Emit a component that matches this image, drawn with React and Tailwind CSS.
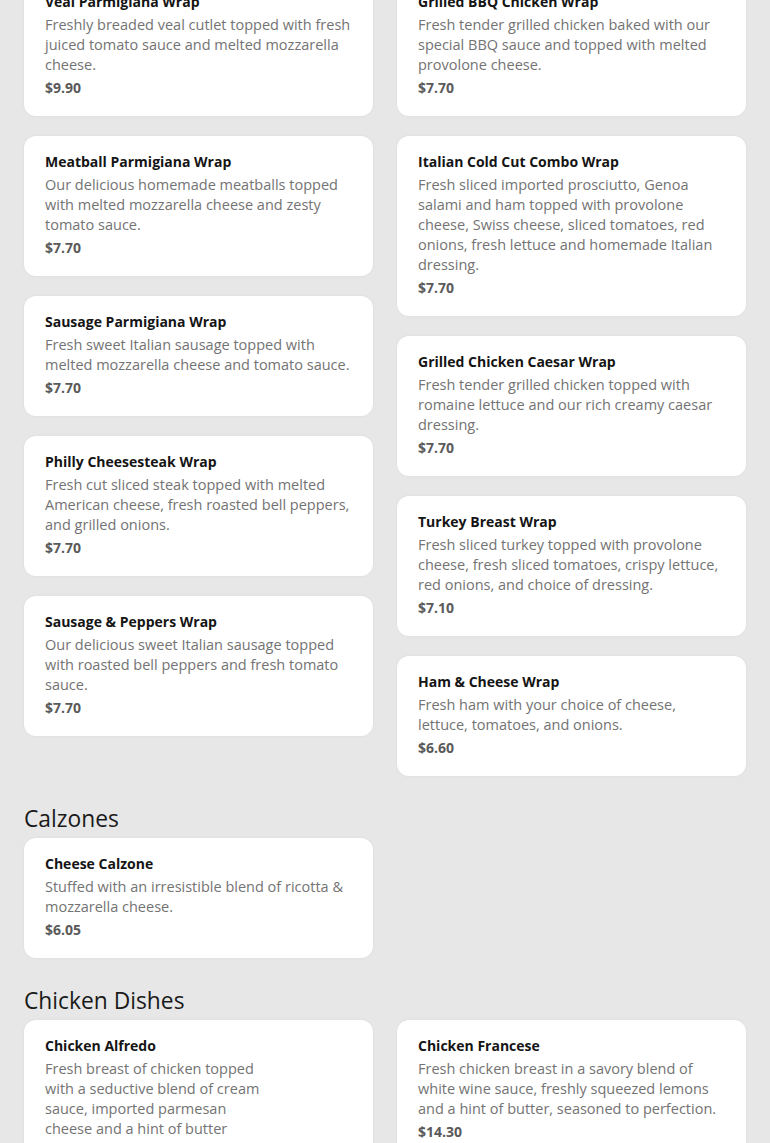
import React from 'react';

// Menu data, split into the two columns as they stack on the page
const wrapsLeft = [
  { name: 'Veal Parmigiana Wrap', desc: 'Freshly breaded veal cutlet topped with fresh juiced tomato sauce and melted mozzarella cheese.', price: '$9.90' },
  { name: 'Meatball Parmigiana Wrap', desc: 'Our delicious homemade meatballs topped with melted mozzarella cheese and zesty tomato sauce.', price: '$7.70' },
  { name: 'Sausage Parmigiana Wrap', desc: 'Fresh sweet Italian sausage topped with melted mozzarella cheese and tomato sauce.', price: '$7.70' },
  { name: 'Philly Cheesesteak Wrap', desc: 'Fresh cut sliced steak topped with melted American cheese, fresh roasted bell peppers, and grilled onions.', price: '$7.70' },
  { name: 'Sausage & Peppers Wrap', desc: 'Our delicious sweet Italian sausage topped with roasted bell peppers and fresh tomato sauce.', price: '$7.70' },
];

const wrapsRight = [
  { name: 'Grilled BBQ Chicken Wrap', desc: 'Fresh tender grilled chicken baked with our special BBQ sauce and topped with melted provolone cheese.', price: '$7.70' },
  { name: 'Italian Cold Cut Combo Wrap', desc: 'Fresh sliced imported prosciutto, Genoa salami and ham topped with provolone cheese, Swiss cheese, sliced tomatoes, red onions, fresh lettuce and homemade Italian dressing.', price: '$7.70' },
  { name: 'Grilled Chicken Caesar Wrap', desc: 'Fresh tender grilled chicken topped with romaine lettuce and our rich creamy caesar dressing.', price: '$7.70' },
  { name: 'Turkey Breast Wrap', desc: 'Fresh sliced turkey topped with provolone cheese, fresh sliced tomatoes, crispy lettuce, red onions, and choice of dressing.', price: '$7.10' },
  { name: 'Ham & Cheese Wrap', desc: 'Fresh ham with your choice of cheese, lettuce, tomatoes, and onions.', price: '$6.60' },
];

const calzones = [
  { name: 'Cheese Calzone', desc: 'Stuffed with an irresistible blend of ricotta & mozzarella cheese.', price: '$6.05' },
];

const chickenLeft = [
  { name: 'Chicken Alfredo', desc: 'Fresh breast of chicken topped with a seductive blend of cream sauce, imported parmesan cheese and a hint of butter', price: '$14.30', narrow: true },
];

const chickenRight = [
  { name: 'Chicken Francese', desc: 'Fresh chicken breast in a savory blend of white wine sauce, freshly squeezed lemons and a hint of butter, seasoned to perfection.', price: '$14.30' },
];

const MenuCard = ({ item }) => (
  <div className="bg-white rounded-xl shadow-[0_0_3px_rgba(0,0,0,0.06)] pl-[21px] pr-[20px] pt-4 pb-[18px]">
    <h4 className="text-[14px] leading-5 font-bold text-[#151515]">{item.name}</h4>
    <p className={`mt-[3px] text-[14.5px] leading-5 text-[#737373] ${item.narrow ? 'max-w-[222px]' : ''}`}>
      {item.desc}
    </p>
    <div className="mt-[3px] text-[14px] leading-5 font-bold text-[#5a5a5a]">{item.price}</div>
  </div>
);

const Column = ({ items }) => (
  <div className="flex flex-col gap-5">
    {items.map((item, idx) => (
      <MenuCard key={idx} item={item} />
    ))}
  </div>
);

const Section = ({ title, left, right }) => (
  <section>
    {title && <h2 className="mt-[27px] mb-[3px] text-[22.8px] leading-8 text-[#1a1a1a]">{title}</h2>}
    <div className="grid grid-cols-2 gap-x-6 items-start">
      <Column items={left} />
      <Column items={right} />
    </div>
  </section>
);

export default function App() {
  return (
    <div className="min-h-screen bg-[#e7e7e7] px-6 overflow-hidden" style={{ fontFamily: '"Open Sans", sans-serif' }}>
      {/* page is scrolled: first card starts above the fold */}
      <div className="-mt-6 pb-10">
        <Section left={wrapsLeft} right={wrapsRight} />
        <Section title="Calzones" left={calzones} right={[]} />
        <Section title="Chicken Dishes" left={chickenLeft} right={chickenRight} />
      </div>
    </div>
  );
}
